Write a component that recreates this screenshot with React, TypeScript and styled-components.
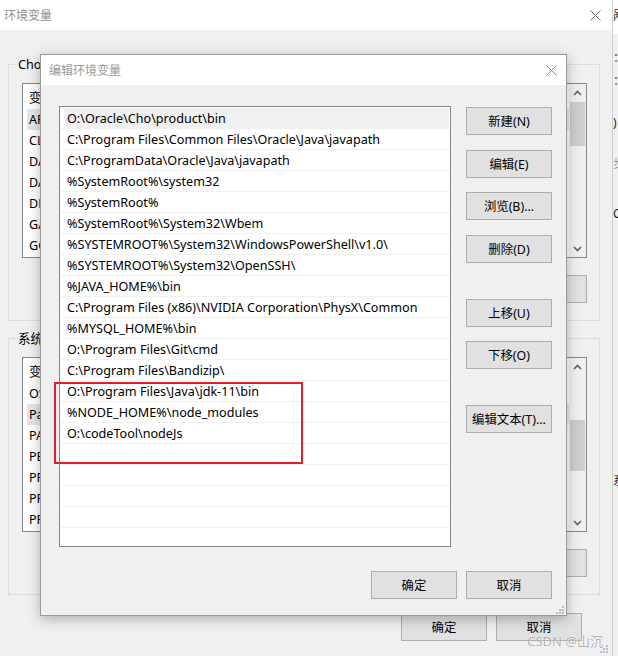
import React from "react";
import styled, { createGlobalStyle } from "styled-components";

const Global = createGlobalStyle`
  html, body { margin: 0; padding: 0; background: #f0f0f0; }
  body {
    font-family: "Noto Sans", "Noto Sans CJK SC", sans-serif;
    font-size: 12px;
    color: #000;
  }
  * { box-sizing: border-box; }
`;

const Desktop = styled.div`
  position: relative;
  width: 618px;
  height: 656px;
  overflow: hidden;
  display: flex;
  background: #f0f0f0;
`;

/* ---------- background window (环境变量) ---------- */
const MainWindow = styled.div`
  position: relative;
  width: 613px;
  flex: none;
  height: 100%;
  display: flex;
  flex-direction: column;
  border-right: 1px solid #cfcfcf;
  background: #f0f0f0;
`;

const TitleBar = styled.div<{ $pl: number; $pr: number; $h: number; $color: string }>`
  height: ${(p) => p.$h}px;
  flex: none;
  background: #fff;
  display: flex;
  align-items: center;
  justify-content: space-between;
  padding: 0 ${(p) => p.$pr}px 0 ${(p) => p.$pl}px;
  color: ${(p) => p.$color};
  font-size: 12px;
  white-space: nowrap;
`;

const MainBody = styled.div`
  flex: 1;
  display: flex;
  flex-direction: column;
  padding: 26px 12px 0 8px;
`;

const Group = styled.fieldset<{ $mt: number }>`
  margin: ${(p) => p.$mt}px 0 0 0;
  padding: 10px 12px 17px 13px;
  border: 1px solid #dcdcdc;
  min-width: 0;
  display: flex;
  flex-direction: column;
`;

const Legend = styled.legend`
  margin-left: -5px;
  padding: 0 1px;
  line-height: 17px;
  font-size: 12.6px;
  white-space: nowrap;
`;

const ListView = styled.div`
  height: 175px;
  border: 1px solid #828790;
  background: #fff;
  display: flex;
  overflow: hidden;
  font-size: 12.6px;
`;

const ListContent = styled.div`
  flex: 1;
  min-width: 0;
  overflow: hidden;
  display: flex;
  flex-direction: column;
  padding-left: 4px;
`;

const HeaderRow = styled.div`
  height: 25px;
  flex: none;
  display: flex;
  align-items: center;
  padding-left: 2px;
`;

const VarRow = styled.div<{ $selected?: boolean }>`
  height: 21px;
  flex: none;
  display: flex;
  align-items: center;
  padding-left: 2px;
  background: ${(p) => (p.$selected ? "#e5e5e5" : "transparent")};
`;

const NameCol = styled.span`
  width: 200px;
  flex: none;
  white-space: nowrap;
  overflow: hidden;
`;

const ValueCol = styled.span`
  flex: 1;
  white-space: nowrap;
  overflow: hidden;
`;

const ScrollBar = styled.div`
  width: 17px;
  flex: none;
  background: #f0f0f0;
  display: flex;
  flex-direction: column;
`;

const ArrowBox = styled.div`
  height: 17px;
  flex: none;
  display: flex;
  align-items: center;
  justify-content: center;
`;

const Track = styled.div`
  flex: 1;
  display: flex;
  flex-direction: column;
`;

const Thumb = styled.div<{ $top: number; $h: number }>`
  margin: ${(p) => p.$top}px 1px 0;
  height: ${(p) => p.$h}px;
  background: #cdcdcd;
`;

const GroupButtons = styled.div`
  margin-top: 17px;
  display: flex;
  justify-content: flex-end;
  gap: 9px;
`;

const Button = styled.button<{ $mt?: number }>`
  width: 86px;
  height: 28px;
  flex: none;
  margin: ${(p) => p.$mt ?? 0}px 0 0 0;
  padding: 0;
  border: 1px solid #adadad;
  background: #e1e1e1;
  font-family: inherit;
  font-size: 12.4px;
  color: #000;
  display: flex;
  align-items: center;
  justify-content: center;
  white-space: nowrap;
`;

const Footer = styled.div<{ $mt: number; $pr: number }>`
  margin-top: ${(p) => p.$mt}px;
  padding-right: ${(p) => p.$pr}px;
  display: flex;
  justify-content: flex-end;
  gap: 9px;
`;

const Grip = styled.div<{ $r: number; $b: number }>`
  position: absolute;
  right: ${(p) => p.$r}px;
  bottom: ${(p) => p.$b}px;
  display: flex;
`;

/* ---------- far right sliver of another window ---------- */
const OtherWindow = styled.div`
  flex: 1;
  min-width: 0;
  overflow: hidden;
  display: flex;
  flex-direction: column;
  background: #f0f0f0;
  font-size: 12px;
  white-space: nowrap;
`;

const OtherTitle = styled.div`
  height: 34px;
  flex: none;
  background: #fff;
  padding-top: 6px;
  color: #333;
`;

const OtherLine = styled.div<{ $mt: number; $c: string }>`
  margin-top: ${(p) => p.$mt}px;
  line-height: 16px;
  color: ${(p) => p.$c};
`;

/* ---------- dialog (编辑环境变量) ---------- */
const Dialog = styled.div`
  position: absolute;
  left: 40px;
  top: 54px;
  width: 527px;
  height: 562px;
  border: 1px solid #9a9a9a;
  background: #f0f0f0;
  box-shadow: 0 3px 12px rgba(0, 0, 0, 0.28);
  display: flex;
  flex-direction: column;
`;

const DialogBody = styled.div`
  flex: 1;
  display: flex;
  flex-direction: column;
  padding: 21px 14px 15px 18px;
`;

const DialogMain = styled.div`
  display: flex;
  gap: 15px;
`;

const PathList = styled.div`
  width: 392px;
  height: 441px;
  flex: none;
  border: 1px solid #828790;
  background: #fff;
  padding: 1px 1px 0;
  overflow: hidden;
  display: flex;
  flex-direction: column;
  font-size: 12.6px;
`;

const PathRow = styled.div`
  height: 21px;
  flex: none;
  border-bottom: 1px solid #f0f0f0;
  padding-left: 3px;
  display: flex;
`;

const PathCell = styled.div<{ $selected?: boolean }>`
  flex: 1;
  display: flex;
  align-items: center;
  padding-left: 3px;
  white-space: nowrap;
  overflow: hidden;
  background: ${(p) => (p.$selected ? "#f0f0f0" : "transparent")};
`;

const ButtonColumn = styled.div`
  display: flex;
  flex-direction: column;
`;

/* ---------- overlays ---------- */
const Annotation = styled.div`
  position: absolute;
  left: 54px;
  top: 382px;
  width: 249px;
  height: 82px;
  border: 2px solid #e31e2b;
`;

const Watermark = styled.div`
  position: absolute;
  right: 15px;
  bottom: 6px;
  font-size: 13px;
  color: rgba(120, 120, 120, 0.55);
  text-shadow: 0 0 2px rgba(255, 255, 255, 0.9);
  white-space: nowrap;
`;

const CloseIcon = ({ color }: { color: string }) => (
  <svg width="11" height="11" viewBox="0 0 11 11">
    <path d="M0.5 0.5 L10.5 10.5 M10.5 0.5 L0.5 10.5" stroke={color} strokeWidth="1" fill="none" />
  </svg>
);

const Chevron = ({ up }: { up?: boolean }) => (
  <svg width="9" height="6" viewBox="0 0 9 6">
    <path
      d={up ? "M1 5 L4.5 1.5 L8 5" : "M1 1 L4.5 4.5 L8 1"}
      stroke="#606060"
      strokeWidth="1.6"
      fill="none"
    />
  </svg>
);

const GripIcon = () => (
  <svg width="8" height="8" viewBox="0 0 8 8">
    {[
      [6, 0],
      [3, 3],
      [6, 3],
      [0, 6],
      [3, 6],
      [6, 6],
    ].map(([x, y], i) => (
      <rect key={i} x={x} y={y} width="2" height="2" fill="#bdbdbd" />
    ))}
  </svg>
);

type Var = { name: string; value: string };

const userVars: Var[] = [
  { name: "APPDATA", value: "C:\\Users\\Cho\\AppData" },
  { name: "CLASSPATH", value: ".;%JAVA_HOME%\\lib" },
  { name: "DATAGRIP", value: "O:\\JetBrains\\DataGrip\\bin" },
  { name: "DATASPELL", value: "O:\\JetBrains\\DataSpell\\bin" },
  { name: "DEVECO", value: "O:\\Huawei\\DevEco\\bin" },
  { name: "GATEWAY", value: "O:\\JetBrains\\Gateway\\bin" },
  { name: "GOLAND", value: "O:\\JetBrains\\GoLand\\bin" },
];

const sysVars: Var[] = [
  { name: "OS", value: "Windows_NT" },
  { name: "Path", value: "O:\\Oracle\\Cho\\product\\bin;C:\\Program Files" },
  { name: "PATHEXT", value: ".COM;.EXE;.BAT;.CMD;.VBS;.VBE;.JS" },
  { name: "PERL5LIB", value: "" },
  { name: "PROCESSOR_ARCHITECTURE", value: "AMD64" },
  { name: "PROCESSOR_IDENTIFIER", value: "Intel64 Family 6" },
  { name: "PROCESSOR_LEVEL", value: "6" },
];

const paths = [
  "O:\\Oracle\\Cho\\product\\bin",
  "C:\\Program Files\\Common Files\\Oracle\\Java\\javapath",
  "C:\\ProgramData\\Oracle\\Java\\javapath",
  "%SystemRoot%\\system32",
  "%SystemRoot%",
  "%SystemRoot%\\System32\\Wbem",
  "%SYSTEMROOT%\\System32\\WindowsPowerShell\\v1.0\\",
  "%SYSTEMROOT%\\System32\\OpenSSH\\",
  "%JAVA_HOME%\\bin",
  "C:\\Program Files (x86)\\NVIDIA Corporation\\PhysX\\Common",
  "%MYSQL_HOME%\\bin",
  "O:\\Program Files\\Git\\cmd",
  "C:\\Program Files\\Bandizip\\",
  "O:\\Program Files\\Java\\jdk-11\\bin",
  "%NODE_HOME%\\node_modules",
  "O:\\codeTool\\nodeJs",
];

const rows = [...paths, ...Array(5).fill("")];

const dialogButtons: { label: string; mt: number }[] = [
  { label: "新建(N)", mt: 1 },
  { label: "编辑(E)", mt: 15 },
  { label: "浏览(B)...", mt: 14 },
  { label: "删除(D)", mt: 15 },
  { label: "上移(U)", mt: 36 },
  { label: "下移(O)", mt: 14 },
  { label: "编辑文本(T)...", mt: 36 },
];

function VarList({ vars, selected, thumbTop, thumbH }: { vars: Var[]; selected: number; thumbTop: number; thumbH: number }) {
  return (
    <ListView>
      <ListContent>
        <HeaderRow>
          <NameCol>变量</NameCol>
          <ValueCol>值</ValueCol>
        </HeaderRow>
        {vars.map((v, i) => (
          <VarRow key={i} $selected={i === selected}>
            <NameCol>{v.name}</NameCol>
            <ValueCol>{v.value}</ValueCol>
          </VarRow>
        ))}
      </ListContent>
      <ScrollBar>
        <ArrowBox>
          <Chevron up />
        </ArrowBox>
        <Track>
          <Thumb $top={thumbTop} $h={thumbH} />
        </Track>
        <ArrowBox>
          <Chevron />
        </ArrowBox>
      </ScrollBar>
    </ListView>
  );
}

export default function App() {
  return (
    <>
      <Global />
      <Desktop>
        <MainWindow>
          <TitleBar $h={30} $pl={4} $pr={11} $color="#8f8f8f">
            <span>环境变量</span>
            <CloseIcon color="#707070" />
          </TitleBar>
          <MainBody>
            <Group $mt={0}>
              <Legend>Cho 的用户变量(U)</Legend>
              <VarList vars={userVars} selected={0} thumbTop={1} thumbH={44} />
              <GroupButtons>
                <Button>新建(N)...</Button>
                <Button>编辑(E)...</Button>
                <Button>删除(D)</Button>
              </GroupButtons>
            </Group>
            <Group $mt={9}>
              <Legend>系统变量(S)</Legend>
              <VarList vars={sysVars} selected={1} thumbTop={45} thumbH={51} />
              <GroupButtons>
                <Button>新建(W)...</Button>
                <Button>编辑(I)...</Button>
                <Button>删除(L)</Button>
              </GroupButtons>
            </Group>
            <Footer $mt={18} $pr={18}>
              <Button>确定</Button>
              <Button>取消</Button>
            </Footer>
          </MainBody>
          <Grip $r={4} $b={3}>
            <GripIcon />
          </Grip>
        </MainWindow>

        <OtherWindow>
          <OtherTitle>剐本</OtherTitle>
          <OtherLine $mt={16} $c="#a3152a">：</OtherLine>
          <OtherLine $mt={7} $c="#a3152a">：</OtherLine>
          <OtherLine $mt={26} $c="#222">)</OtherLine>
          <OtherLine $mt={25} $c="#999">步</OtherLine>
          <OtherLine $mt={34} $c="#222">C</OtherLine>
          <OtherLine $mt={251} $c="#222">系</OtherLine>
        </OtherWindow>

        <Dialog>
          <TitleBar $h={30} $pl={8} $pr={9} $color="#9a9a9a">
            <span>编辑环境变量</span>
            <CloseIcon color="#8a8a8a" />
          </TitleBar>
          <DialogBody>
            <DialogMain>
              <PathList>
                {rows.map((p, i) => (
                  <PathRow key={i}>
                    <PathCell $selected={i === 0}>{p}</PathCell>
                  </PathRow>
                ))}
              </PathList>
              <ButtonColumn>
                {dialogButtons.map((b) => (
                  <Button key={b.label} $mt={b.mt}>
                    {b.label}
                  </Button>
                ))}
              </ButtonColumn>
            </DialogMain>
            <Footer $mt={24} $pr={0}>
              <Button>确定</Button>
              <Button>取消</Button>
            </Footer>
          </DialogBody>
          <Grip $r={2} $b={1}>
            <GripIcon />
          </Grip>
        </Dialog>

        <Annotation />
        <Watermark>CSDN @山沉</Watermark>
      </Desktop>
    </>
  );
}
